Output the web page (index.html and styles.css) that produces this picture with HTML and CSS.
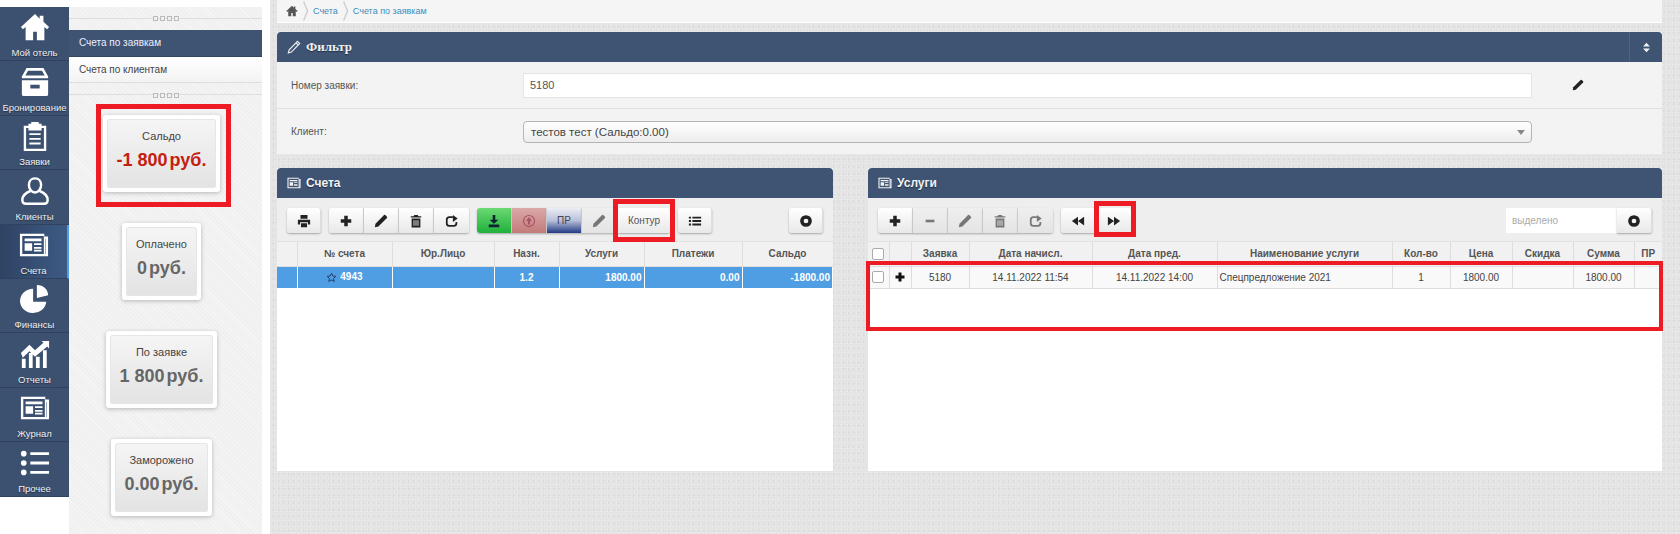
FILE: index.html
```html
<!DOCTYPE html>
<html lang="ru">
<head>
    <meta charset="UTF-8">
    <title>Счета по заявкам</title>
    <link rel="stylesheet" href="styles.css">
</head>
<body>
    <svg class="sprite" xmlns="http://www.w3.org/2000/svg">
        <symbol id="i-home" viewBox="0 0 32 32"><path d="M16 2 1 16l2 2.5 3-2.600V30h8v-9h4v9h8V15.900l3 2.600 2-2.500-6-5.600V4h-4v3.200z"/></symbol>
        <symbol id="i-box" viewBox="0 0 32 32"><path fill-rule="evenodd" d="M7 1h18l5 9v2H2v-2zM8.500 4l-2.800 5h20.600l-2.800-5zM2 14h28v15a2 2 0 0 1-2 2H4a2 2 0 0 1-2-2zM11 19v3a1 1 0 0 0 1 1h8a1 1 0 0 0 1-1v-3z"/></symbol>
        <symbol id="i-clip" viewBox="0 0 32 32"><path fill-rule="evenodd" d="M12 3V1h8v2h3v2h5v27H4V5h5V3zM6.500 7.500v22h19v-22H23V10H9V7.500zM10 13h12v2H10zM10 18h12v2H10zM10 23h12v2H10z"/></symbol>
        <symbol id="i-user" viewBox="0 0 32 32"><path fill="none" stroke="currentColor" stroke-width="2.600" d="M16 2.500c4 0 6.500 3 6.500 7s-2.500 8-6.500 8-6.500-4-6.500-8 2.500-7 6.500-7zM11 16c-5 2-8.500 5-8.500 9.500 0 2.500 1.500 4 4 4h19c2.500 0 4-1.500 4-4 0-4.500-3.500-7.500-8.500-9.500"/></symbol>
        <symbol id="i-news" viewBox="0 0 32 32"><path fill-rule="evenodd" d="M1 4h26v3h4v21H1zM3.500 6.500v19h23V6.500zM28.500 9.500H28v16h.500zM6 9h18v3H6zM6 14h8v8H6zM16 14h8v2h-8zM16 18h8v2h-8zM16 21h8v2h-8z"/></symbol>
        <symbol id="i-pie" viewBox="0 0 32 32"><path d="M14 5v14h14a14 13 0 1 1-14-14zM18 1c7 0 12 5 12 11l-12 3z"/></symbol>
        <symbol id="i-chart" viewBox="0 0 32 32"><path d="M2 21h4v10H2zM9.500 15h4v16h-4zM17 19h4v12h-4zM24.500 12h4v19h-4zM1 15l9-9 6 6L25 4l-2-2h8v8l-2-2-13 11-6-6-7 7z"/></symbol>
        <symbol id="i-list" viewBox="0 0 32 32"><circle cx="4" cy="6" r="3"/><circle cx="4" cy="16" r="3"/><circle cx="4" cy="26" r="3"/><path d="M11 4.500h20v3H11zM11 14.500h20v3H11zM11 24.500h20v3H11z"/></symbol>
        <symbol id="i-pencil" viewBox="0 0 16 16"><path d="M11.500 1.200a1 1 0 0 1 1.400 0l1.900 1.900a1 1 0 0 1 0 1.400L5 14.300 1 15l.7-4z"/></symbol>
        <symbol id="i-pencil-line" viewBox="0 0 16 16"><path fill="none" stroke="currentColor" stroke-width="1.300" d="M12 1.500l2.500 2.500L5 13.800l-3.500 1 1-3.600zM10.300 3.300l2.500 2.500"/></symbol>
        <symbol id="i-plus" viewBox="0 0 16 16"><path d="M6 2h4v4h4v4h-4v4H6v-4H2V6h4z"/></symbol>
        <symbol id="i-minus" viewBox="0 0 16 16"><path d="M3 6.500h10v3H3z"/></symbol>
        <symbol id="i-trash" viewBox="0 0 16 16"><path fill-rule="evenodd" d="M6 1h4l.8 1.500H14V4H2V2.500h3.200zM3 5h10v10.500H3zM5.200 7v6.500h1V7zM7.500 7v6.500h1V7zM9.800 7v6.500h1V7z"/></symbol>
        <symbol id="i-redo" viewBox="0 0 16 16"><path fill="none" stroke="currentColor" stroke-width="2" d="M9 3.500H5a3 3 0 0 0-3 3v4a3 3 0 0 0 3 3h5a3 3 0 0 0 3-3V9"/><path d="M9 1l5.500 4L9 9z"/></symbol>
        <symbol id="i-print" viewBox="0 0 16 16"><path fill-rule="evenodd" d="M4 1h8v4.500H4zM1 6.500h14V12h-2.500V9.500h-9V12H1zM4.500 10.500h7V15h-7z"/></symbol>
        <symbol id="i-back" viewBox="0 0 16 16"><path d="M8 3v10L1 8zM15 3v10L8 8z"/></symbol>
        <symbol id="i-fwd" viewBox="0 0 16 16"><path d="M1 3v10l7-5zM8 3v10l7-5z"/></symbol>
        <symbol id="i-stop" viewBox="0 0 16 16"><circle cx="8" cy="8" r="4.700" fill="none" stroke="currentColor" stroke-width="4"/></symbol>
        <symbol id="i-rows" viewBox="0 0 16 16"><path d="M1 3h2.500v2.200H1zM5 3h10v2.200H5zM1 6.900h2.500v2.200H1zM5 6.900h10v2.200H5zM1 10.800h2.500V13H1zM5 10.800h10V13H5z"/></symbol>
        <symbol id="i-stamp" viewBox="0 0 16 16"><path d="M6.500 1h3v5.500H13L8 11 3 6.500h3.500zM2 12h12v3H2z"/></symbol>
        <symbol id="i-up" viewBox="0 0 16 16"><circle cx="8" cy="8" r="6.300" fill="none" stroke="currentColor" stroke-width="1.400"/><path d="M8 3.500 11.500 8H9.200v4H6.800V8H4.500z"/></symbol>
        <symbol id="i-star" viewBox="0 0 16 16"><path fill="none" stroke="currentColor" stroke-width="1.300" d="m8 1.800 1.900 4 4.400.5-3.300 3 .9 4.400L8 11.500l-3.900 2.200.9-4.400-3.300-3 4.400-.5z"/></symbol>
        <symbol id="i-sort" viewBox="0 0 16 16"><path d="M8 1l5 5.500H3zM8 15l-5-5.500h10z"/></symbol>
    </svg>

    <nav class="menu">
        <a class="menu-item"><svg><use href="#i-home"/></svg>Мой отель</a>
        <a class="menu-item"><svg><use href="#i-box"/></svg>Бронирование</a>
        <a class="menu-item"><svg><use href="#i-clip"/></svg>Заявки</a>
        <a class="menu-item"><svg><use href="#i-user"/></svg>Клиенты</a>
        <a class="menu-item active"><svg><use href="#i-news"/></svg>Счета</a>
        <a class="menu-item"><svg><use href="#i-pie"/></svg>Финансы</a>
        <a class="menu-item"><svg><use href="#i-chart"/></svg>Отчеты</a>
        <a class="menu-item"><svg><use href="#i-news"/></svg>Журнал</a>
        <a class="menu-item"><svg><use href="#i-list"/></svg>Прочее</a>
    </nav>

    <aside class="subpanel">
        <div class="splitter"><i></i><i></i><i></i><i></i></div>
        <a class="tab active">Счета по заявкам</a>
        <a class="tab">Счета по клиентам</a>
        <div class="splitter second"><i></i><i></i><i></i><i></i></div>
        <div class="cards">
            <div class="card mark-saldo"><div class="card-in"><span>Сальдо</span><b class="red">-1 800 <em>руб.</em></b></div></div>
            <div class="card"><div class="card-in"><span>Оплачено</span><b>0 <em>руб.</em></b></div></div>
            <div class="card"><div class="card-in"><span>По заявке</span><b>1 800 <em>руб.</em></b></div></div>
            <div class="card"><div class="card-in"><span>Заморожено</span><b>0.00 <em>руб.</em></b></div></div>
        </div>
    </aside>

    <main class="main">
        <div class="crumbs">
            <svg class="crumb-home"><use href="#i-home"/></svg>
            <span class="crumb-sep"></span>
            <a>Счета</a>
            <span class="crumb-sep"></span>
            <a>Счета по заявкам</a>
        </div>

        <section class="panel filter">
            <header class="panel-head">
                <svg><use href="#i-pencil-line"/></svg>
                <h2 class="serif">Фильтр</h2>
                <span class="collapse"><svg><use href="#i-sort"/></svg></span>
            </header>
            <div class="filter-row">
                <label>Номер заявки:</label>
                <div class="field">5180</div>
                <svg class="row-pencil"><use href="#i-pencil"/></svg>
            </div>
            <div class="filter-row">
                <label>Клиент:</label>
                <div class="select">тестов тест (Сальдо:0.00)<i></i></div>
            </div>
        </section>

        <div class="columns">
            <section class="panel grid-panel">
                <header class="panel-head">
                    <svg><use href="#i-news"/></svg>
                    <h2>Счета</h2>
                </header>
                <div class="toolbar">
                    <button class="btn"><svg><use href="#i-print"/></svg></button>
                    <div class="group">
                        <button class="btn"><svg><use href="#i-plus"/></svg></button>
                        <button class="btn"><svg><use href="#i-pencil"/></svg></button>
                        <button class="btn"><svg><use href="#i-trash"/></svg></button>
                        <button class="btn"><svg><use href="#i-redo"/></svg></button>
                    </div>
                    <div class="group">
                        <button class="btn green"><svg><use href="#i-stamp"/></svg></button>
                        <button class="btn rose"><svg><use href="#i-up"/></svg></button>
                        <button class="btn navy">ПР</button>
                        <button class="btn muted"><svg><use href="#i-pencil"/></svg></button>
                        <button class="btn wide mark-kontur">Контур</button>
                    </div>
                    <button class="btn"><svg><use href="#i-rows"/></svg></button>
                    <button class="btn push"><svg><use href="#i-stop"/></svg></button>
                </div>
                <table class="grid bills">
                    <colgroup><col class="b1"><col class="b2"><col class="b3"><col class="b4"><col class="b5"><col class="b6"><col></colgroup>
                    <thead>
                        <tr><th></th><th>№ счета</th><th>Юр.Лицо</th><th>Назн.</th><th>Услуги</th><th>Платежи</th><th>Сальдо</th></tr>
                    </thead>
                    <tbody>
                        <tr class="selected">
                            <td></td>
                            <td class="mid"><svg class="star"><use href="#i-star"/></svg> 4943</td>
                            <td></td>
                            <td class="mid">1.2</td>
                            <td class="num">1800.00</td>
                            <td class="num">0.00</td>
                            <td class="num">-1800.00</td>
                        </tr>
                    </tbody>
                </table>
            </section>

            <section class="panel grid-panel services">
                <header class="panel-head">
                    <svg><use href="#i-news"/></svg>
                    <h2>Услуги</h2>
                </header>
                <div class="toolbar">
                    <div class="group">
                        <button class="btn"><svg><use href="#i-plus"/></svg></button>
                        <button class="btn muted"><svg><use href="#i-minus"/></svg></button>
                        <button class="btn muted"><svg><use href="#i-pencil"/></svg></button>
                        <button class="btn muted"><svg><use href="#i-trash"/></svg></button>
                        <button class="btn muted"><svg><use href="#i-redo"/></svg></button>
                    </div>
                    <div class="group">
                        <button class="btn"><svg><use href="#i-back"/></svg></button>
                        <button class="btn mark-fwd"><svg><use href="#i-fwd"/></svg></button>
                    </div>
                    <div class="picked push">
                        <span class="picked-text">выделено</span>
                        <button class="btn"><svg><use href="#i-stop"/></svg></button>
                    </div>
                </div>
                <table class="grid lines">
                    <colgroup><col class="l1"><col class="l2"><col class="l3"><col class="l4"><col class="l5"><col class="l6"><col class="l7"><col class="l8"><col class="l9"><col class="l10"><col></colgroup>
                    <thead>
                        <tr><th><input type="checkbox"></th><th></th><th>Заявка</th><th>Дата начисл.</th><th>Дата пред.</th><th>Наименование услуги</th><th>Кол-во</th><th>Цена</th><th>Скидка</th><th>Сумма</th><th>ПР</th></tr>
                    </thead>
                    <tbody>
                        <tr>
                            <td class="mid"><input type="checkbox"></td>
                            <td class="mid"><svg class="expand"><use href="#i-plus"/></svg></td>
                            <td class="mid">5180</td>
                            <td class="mid">14.11.2022 11:54</td>
                            <td class="mid">14.11.2022 14:00</td>
                            <td>Спецпредложение 2021</td>
                            <td class="mid">1</td>
                            <td class="mid">1800.00</td>
                            <td></td>
                            <td class="mid">1800.00</td>
                            <td></td>
                        </tr>
                    </tbody>
                </table>
                <div class="mark-rows"></div>
            </section>
        </div>
    </main>
</body>
</html>
```

FILE: styles.css
```css
* {
    box-sizing: border-box;
}

body {
    margin: 0;
    height: 100vh;
    display: flex;
    overflow: hidden;
    background-color: #fff;
    font-family: "Liberation Sans", Arial, sans-serif;
    font-size: 10px;
    color: #444;
}

svg {
    fill: currentColor;
}

.sprite {
    display: none;
}

/* левое меню */
.menu {
    width: 69px;
    height: 490px;
    margin-top: 7px;
    flex: none;
    display: flex;
    flex-direction: column;
    background-color: #3c5170;
}

.menu-item {
    height: 54.4px;
    display: flex;
    flex-direction: column;
    align-items: center;
    justify-content: flex-end;
    padding-bottom: 1px;
    border-bottom: 1px solid #2f4260;
    font-size: 9.5px;
    line-height: 12px;
    color: #f0f0f0;
    white-space: nowrap;
    text-shadow: 0 1px 1px #1d2c44;
}

.menu-item svg {
    width: 30px;
    height: 30px;
    margin-bottom: 5px;
    color: #fff;
}

.menu-item.active {
    background: linear-gradient(to right, #2f4363, #3d5a84);
    border-right: 2px solid #4f9ee3;
}

/* средняя колонка */
.subpanel {
    width: 193px;
    margin: 7px 8px 0 0;
    flex: none;
    background-color: #f0f0f0;
    background-image: repeating-linear-gradient(45deg, rgba(255, 255, 255, .35) 0 1px, transparent 1px 3px);
}

.splitter {
    height: 23px;
    display: flex;
    align-items: center;
    justify-content: center;
    gap: 2px;
    background: linear-gradient(#ddd, #ddd) 0 11px / 100% 1px no-repeat;
}

.splitter.second {
    height: 24px;
}

.splitter i {
    width: 5px;
    height: 5px;
    background-color: #f0f0f0;
    border: 1px solid #bbb;
}

.tab {
    display: block;
    height: 26px;
    padding-left: 10px;
    font-size: 10px;
    line-height: 26px;
    color: #444;
    background: linear-gradient(#fff, #f3f3f3);
    border-bottom: 1px solid #ddd;
}

.tab.active {
    height: 27px;
    color: #eef;
    background: #3f5473;
    border-bottom: 1px solid #34465f;
}

.cards {
    display: flex;
    flex-direction: column;
    align-items: center;
    gap: 31px;
    padding: 8px 8px 0 0;
}

.card {
    position: relative;
    padding: 4px;
    background-color: #fff;
    border-radius: 3px;
    box-shadow: 0 1px 4px rgba(0, 0, 0, .25);
}

.card-in {
    height: 69px;
    padding: 10px 10px 0;
    display: flex;
    flex-direction: column;
    align-items: center;
    border-radius: 3px;
    background: linear-gradient(#f5f5f5, #e3e3e3);
    box-shadow: inset 0 0 0 1px #e6e6e6;
    white-space: nowrap;
}

.card-in span {
    font-size: 11px;
    line-height: 14px;
    color: #444;
}

.card-in b {
    margin-top: 5px;
    font-size: 18px;
    line-height: 24px;
    color: #666;
}

.card-in b em {
    margin-left: -3px;
    font-style: normal;
}

.card-in b.red {
    color: #c4200f;
}

/* красные рамки поверх интерфейса */
.mark-saldo::after,
.mark-kontur::after,
.mark-fwd::after,
.mark-rows {
    content: "";
    position: absolute;
    border: 5px solid #ed1c24;
    pointer-events: none;
}

.mark-saldo::after {
    top: -11px;
    right: -11px;
    bottom: -15px;
    left: -7px;
}

.mark-kontur {
    position: relative;
}

.mark-kontur::after {
    top: -9px;
    right: -5px;
    bottom: -9px;
    left: -5px;
}

.mark-fwd {
    position: relative;
}

.mark-fwd::after {
    top: -7px;
    right: -5px;
    bottom: -4px;
    left: -2px;
}

.mark-rows {
    top: 93px;
    left: -2px;
    width: 797px;
    height: 70px;
    border-width: 4px;
}

/* основная часть */
.main {
    flex: 1;
    min-width: 0;
    padding: 0 18px 0 7px;
    background-color: #e4e4e4;
    background-image:
        radial-gradient(rgba(255, 255, 255, .35) 1px, transparent 1px),
        radial-gradient(rgba(0, 0, 0, .04) 1px, transparent 1px);
    background-size: 3px 3px, 5px 7px;
    background-position: 0 0, 1px 2px;
}

.crumbs {
    height: 23px;
    margin-bottom: 9px;
    padding-left: 9px;
    display: flex;
    align-items: center;
    gap: 6px;
    background-color: #f5f5f5;
    border-bottom: 1px solid #fff;
    font-size: 9px;
    color: #3b8dbd;
}

.crumb-home {
    width: 12px;
    height: 12px;
    color: #555;
}

.crumb-sep {
    width: 6px;
    height: 6px;
    margin-left: -3px;
    border-top: 1px solid #ccc;
    border-right: 1px solid #ccc;
    transform: scaleY(2.4) rotate(45deg);
}

.panel {
    position: relative;
    background-color: #fff;
}

.panel-head {
    height: 30px;
    padding-left: 10px;
    display: flex;
    align-items: center;
    gap: 5px;
    background-color: #3f5472;
    border-radius: 4px 4px 0 0;
    color: #f2f2f2;
}

.panel-head > svg {
    width: 14px;
    height: 14px;
}

.panel-head h2 {
    margin: 0;
    font-size: 12px;
    font-weight: bold;
    text-shadow: 0 1px 1px #1d2c44;
}

.panel-head h2.serif {
    font-family: "Liberation Serif", serif;
    font-size: 13px;
}

.collapse {
    width: 33px;
    height: 100%;
    margin-left: auto;
    display: flex;
    align-items: center;
    justify-content: center;
    border-left: 1px solid #4d6382;
}

.collapse svg {
    width: 11px;
    height: 11px;
}

.filter {
    margin-bottom: 14px;
    background-color: #f3f3f3;
}

.filter-row {
    height: 46px;
    padding-left: 14px;
    display: flex;
    align-items: center;
    font-size: 10px;
    color: #555;
}

.filter-row + .filter-row {
    border-top: 1px solid #e0e0e0;
}

.filter-row label {
    width: 232px;
    flex: none;
}

.field {
    width: 1009px;
    height: 25px;
    padding-left: 6px;
    background-color: #fff;
    border: 1px solid #e4e4e4;
    font-size: 11px;
    line-height: 23px;
}

.row-pencil {
    width: 12px;
    height: 12px;
    margin-left: 40px;
    color: #222;
}

.select {
    position: relative;
    width: 1009px;
    height: 22px;
    padding-left: 7px;
    background: linear-gradient(#fff, #ececec);
    border: 1px solid #b5b5b5;
    border-radius: 4px;
    font-size: 11.5px;
    line-height: 20px;
    color: #444;
}

.select i {
    position: absolute;
    top: 8px;
    right: 6px;
    border: 4px solid transparent;
    border-top: 5px solid #888;
    border-bottom: 0;
}

.columns {
    display: grid;
    grid-template-columns: 556px 794px;
    gap: 35px;
}

.grid-panel {
    height: 303px;
}

.toolbar {
    height: 44px;
    padding: 10px 10px 0;
    display: flex;
    align-items: flex-start;
    gap: 8px;
    background-color: #eee;
    border-bottom: 1px solid #e2e2e2;
}

.group {
    display: flex;
}

.btn {
    width: 34px;
    height: 25px;
    padding: 0;
    display: flex;
    align-items: center;
    justify-content: center;
    font-family: inherit;
    font-size: 10px;
    color: #222;
    background: linear-gradient(#fff, #e8e8e8);
    border: 0;
    border-right: 1px solid #ddd;
    border-radius: 3px;
    box-shadow: 0 1px 2px rgba(0, 0, 0, .3);
}

.group .btn {
    border-radius: 0;
    width: 35px;
}

.group .btn:first-child {
    border-radius: 3px 0 0 3px;
}

.group .btn:last-child {
    border-radius: 0 3px 3px 0;
    border-right: 0;
}

.btn svg {
    width: 14px;
    height: 14px;
}

.btn.muted {
    color: #777;
    background: linear-gradient(#efefef, #e4e4e4);
}

.group .btn.wide {
    width: 52px;
    margin-left: 1px;
    color: #555;
}

.btn.green {
    color: #123;
    background: linear-gradient(#6cd873, #1fb13c);
}

.btn.rose {
    color: #a56;
    background: linear-gradient(#dba8a8, #c27b7b);
}

.btn.navy {
    color: #445;
    background: linear-gradient(#eceef5, #b9c0d8 50%, #213a85);
}

.push {
    margin-left: auto;
}

.picked {
    display: flex;
}

.picked-text {
    width: 111px;
    height: 25px;
    padding-left: 6px;
    background-color: #fff;
    font-size: 10px;
    line-height: 25px;
    color: #aaa;
}

.picked .btn {
    width: 35px;
    border-radius: 0 3px 3px 0;
}

.grid {
    width: 100%;
    border-collapse: collapse;
    table-layout: fixed;
    font-size: 10px;
}

.grid th {
    height: 24px;
    padding: 0;
    font-weight: bold;
    color: #555;
    background-color: #f1f1f1;
    border-right: 1px solid #ddd;
    border-bottom: 1px solid #ddd;
}

.grid th:last-child,
.grid td:last-child {
    border-right: 0;
}

.grid td {
    height: 22px;
    padding: 0 2px;
    border-right: 1px solid #ddd;
    border-bottom: 1px solid #ddd;
    background-color: #f9f9f9;
    white-space: nowrap;
}

.grid .mid {
    text-align: center;
}

.grid .num {
    text-align: right;
}

.grid .selected td {
    background-color: #4f9ee3;
    color: #fff;
    font-weight: bold;
    border-right: 1px solid #fff;
    border-bottom: 0;
}

.star {
    width: 11px;
    height: 11px;
    vertical-align: -3px;
    color: #1c3560;
}

.expand {
    width: 12px;
    height: 12px;
    vertical-align: -3px;
    color: #111;
}

.grid input {
    appearance: none;
    display: block;
    width: 12px;
    height: 12px;
    margin: 0 auto;
    background-color: #fff;
    border: 1px solid #aaa;
    border-radius: 2px;
}

.b1 { width: 20px; }
.b2 { width: 95px; }
.b3 { width: 102px; }
.b4 { width: 65px; }
.b5 { width: 85px; }
.b6 { width: 98px; }

.l1 { width: 21px; }
.l2 { width: 22px; }
.l3 { width: 58px; }
.l4 { width: 123px; }
.l5 { width: 125px; }
.l6 { width: 175px; }
.l7 { width: 58px; }
.l8 { width: 62px; }
.l9 { width: 61px; }
.l10 { width: 61px; }
```
